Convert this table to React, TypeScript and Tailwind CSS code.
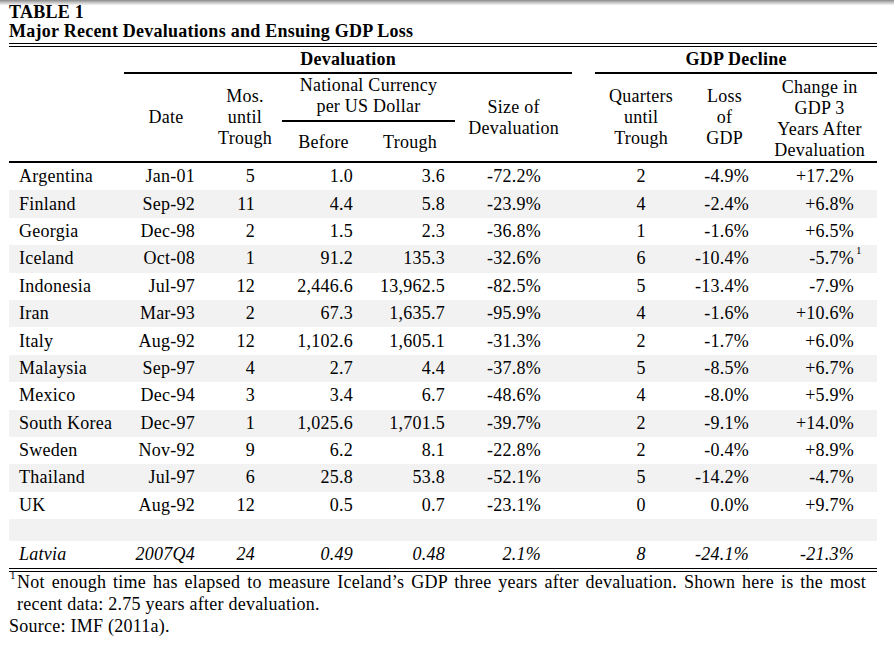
import React from "react";

type Row = string[];

const rows: Row[] = [
  ["Argentina", "Jan-01", "5", "1.0", "3.6", "-72.2%", "2", "-4.9%", "+17.2%"],
  ["Finland", "Sep-92", "11", "4.4", "5.8", "-23.9%", "4", "-2.4%", "+6.8%"],
  ["Georgia", "Dec-98", "2", "1.5", "2.3", "-36.8%", "1", "-1.6%", "+6.5%"],
  ["Iceland", "Oct-08", "1", "91.2", "135.3", "-32.6%", "6", "-10.4%", "-5.7%"],
  ["Indonesia", "Jul-97", "12", "2,446.6", "13,962.5", "-82.5%", "5", "-13.4%", "-7.9%"],
  ["Iran", "Mar-93", "2", "67.3", "1,635.7", "-95.9%", "4", "-1.6%", "+10.6%"],
  ["Italy", "Aug-92", "12", "1,102.6", "1,605.1", "-31.3%", "2", "-1.7%", "+6.0%"],
  ["Malaysia", "Sep-97", "4", "2.7", "4.4", "-37.8%", "5", "-8.5%", "+6.7%"],
  ["Mexico", "Dec-94", "3", "3.4", "6.7", "-48.6%", "4", "-8.0%", "+5.9%"],
  ["South Korea", "Dec-97", "1", "1,025.6", "1,701.5", "-39.7%", "2", "-9.1%", "+14.0%"],
  ["Sweden", "Nov-92", "9", "6.2", "8.1", "-22.8%", "2", "-0.4%", "+8.9%"],
  ["Thailand", "Jul-97", "6", "25.8", "53.8", "-52.1%", "5", "-14.2%", "-4.7%"],
  ["UK", "Aug-92", "12", "0.5", "0.7", "-23.1%", "0", "0.0%", "+9.7%"],
];

const latvia: Row = ["Latvia", "2007Q4", "24", "0.49", "0.48", "2.1%", "8", "-24.1%", "-21.3%"];

// per-column alignment for the data cells (gap column sits between index 5 and 6)
const cellCls = [
  "pl-[10px] text-left",
  "pr-[13px] text-right",
  "pr-[27px] text-right",
  "pr-[12px] text-right",
  "pr-[10px] text-right",
  "pr-[31px] text-right",
  "text-center",
  "pr-[13px] text-right",
  "pr-[23px] text-right",
];

function DataCells({ row, note }: { row: Row; note?: boolean }) {
  return (
    <>
      {row.slice(0, 6).map((v, i) => (
        <td key={i} className={`p-0 align-middle ${cellCls[i]}`}>
          {v}
        </td>
      ))}
      <td className="p-0" />
      {row.slice(6).map((v, i) => (
        <td key={i + 6} className={`p-0 align-middle ${cellCls[i + 6]}`}>
          <span className="relative">
            {v}
            {note && i === 2 && (
              <sup className="absolute left-full top-[-3px] ml-[2px] text-[11px] leading-none">1</sup>
            )}
          </span>
        </td>
      ))}
    </>
  );
}

export default function App() {
  return (
    <div
      className="relative min-h-[648px] w-[894px] bg-white text-black"
      style={{ fontFamily: '"Liberation Serif", "Times New Roman", serif' }}
    >
      <div className="absolute left-0 top-0 h-[5px] w-full bg-gradient-to-b from-[#8a8a8a] via-[#c4c4c4] to-[#f4f4f4]" />

      <div className="ml-[9px] w-[868px] pt-[3px] text-[18px] tracking-[0.25px]">
        <div className="font-bold leading-[19px]">
          <div>TABLE 1</div>
          <div>Major Recent Devaluations and Ensuing GDP Loss</div>
        </div>
        <div className="mt-[2px] h-[4px] border-y border-black" />

        <table className="w-[868px] table-fixed border-separate border-spacing-0">
          <colgroup>
            <col className="w-[115px]" />
            <col className="w-[84px]" />
            <col className="w-[74px]" />
            <col className="w-[83px]" />
            <col className="w-[90px]" />
            <col className="w-[117px]" />
            <col className="w-[23px]" />
            <col className="w-[92px]" />
            <col className="w-[75px]" />
            <col className="w-[115px]" />
          </colgroup>
          <thead className="leading-[21px]">
            <tr className="h-[27px]">
              <th className="p-0" />
              <th colSpan={5} className="border-b-2 border-black p-0 align-middle font-bold">
                Devaluation
              </th>
              <th className="p-0" />
              <th colSpan={3} className="border-b-2 border-black p-0 align-middle font-bold">
                GDP Decline
              </th>
            </tr>
            <tr className="h-[48px]">
              <th rowSpan={2} className="border-b-2 border-black p-0" />
              <th rowSpan={2} className="border-b-2 border-black p-0 align-middle font-normal">
                Date
              </th>
              <th rowSpan={2} className="border-b-2 border-black p-0 align-middle font-normal">
                Mos.
                <br />
                until
                <br />
                Trough
              </th>
              <th colSpan={2} className="border-b-2 border-black p-0 pb-[3px] align-middle font-normal">
                National Currency
                <br />
                per US Dollar
              </th>
              <th rowSpan={2} className="border-b-2 border-black p-0 align-middle font-normal">
                Size of
                <br />
                Devaluation
              </th>
              <th rowSpan={2} className="border-b-2 border-black p-0" />
              <th rowSpan={2} className="border-b-2 border-black p-0 align-middle font-normal">
                Quarters
                <br />
                until
                <br />
                Trough
              </th>
              <th rowSpan={2} className="border-b-2 border-black p-0 align-middle font-normal">
                Loss
                <br />
                of
                <br />
                GDP
              </th>
              <th rowSpan={2} className="border-b-2 border-black p-0 pt-[3px] align-middle font-normal">
                Change in
                <br />
                GDP 3
                <br />
                Years After
                <br />
                Devaluation
              </th>
            </tr>
            <tr className="h-[41px]">
              <th className="border-b-2 border-black p-0 pt-[1px] align-middle font-normal">Before</th>
              <th className="border-b-2 border-black p-0 pt-[1px] align-middle font-normal">Trough</th>
            </tr>
          </thead>
          <tbody>
            {rows.map((r, i) => (
              <tr key={r[0]} className={`h-[27.4px] ${i % 2 === 1 ? "bg-[#f2f2f2]" : "bg-white"}`}>
                <DataCells row={r} note={r[0] === "Iceland"} />
              </tr>
            ))}
            <tr className="h-[22px] bg-[#f2f2f2]">
              <td colSpan={10} className="p-0" />
            </tr>
            <tr className="h-[25px] italic">
              <DataCells row={latvia} />
            </tr>
          </tbody>
        </table>
        <div className="h-[4px] border-y border-black" />

        <div className="mt-[-1px] leading-[22px]">
          <div className="relative pl-[8px]">
            <sup className="absolute left-[1px] top-[-1px] text-[11px] leading-none">1</sup>
            <div className="w-[849px] text-justify [text-align-last:justify]">
              Not enough time has elapsed to measure Iceland’s GDP three years after devaluation. Shown here is the most
            </div>
            <div>recent data: 2.75 years after devaluation.</div>
          </div>
          <div>Source: IMF (2011a).</div>
        </div>
      </div>
    </div>
  );
}
